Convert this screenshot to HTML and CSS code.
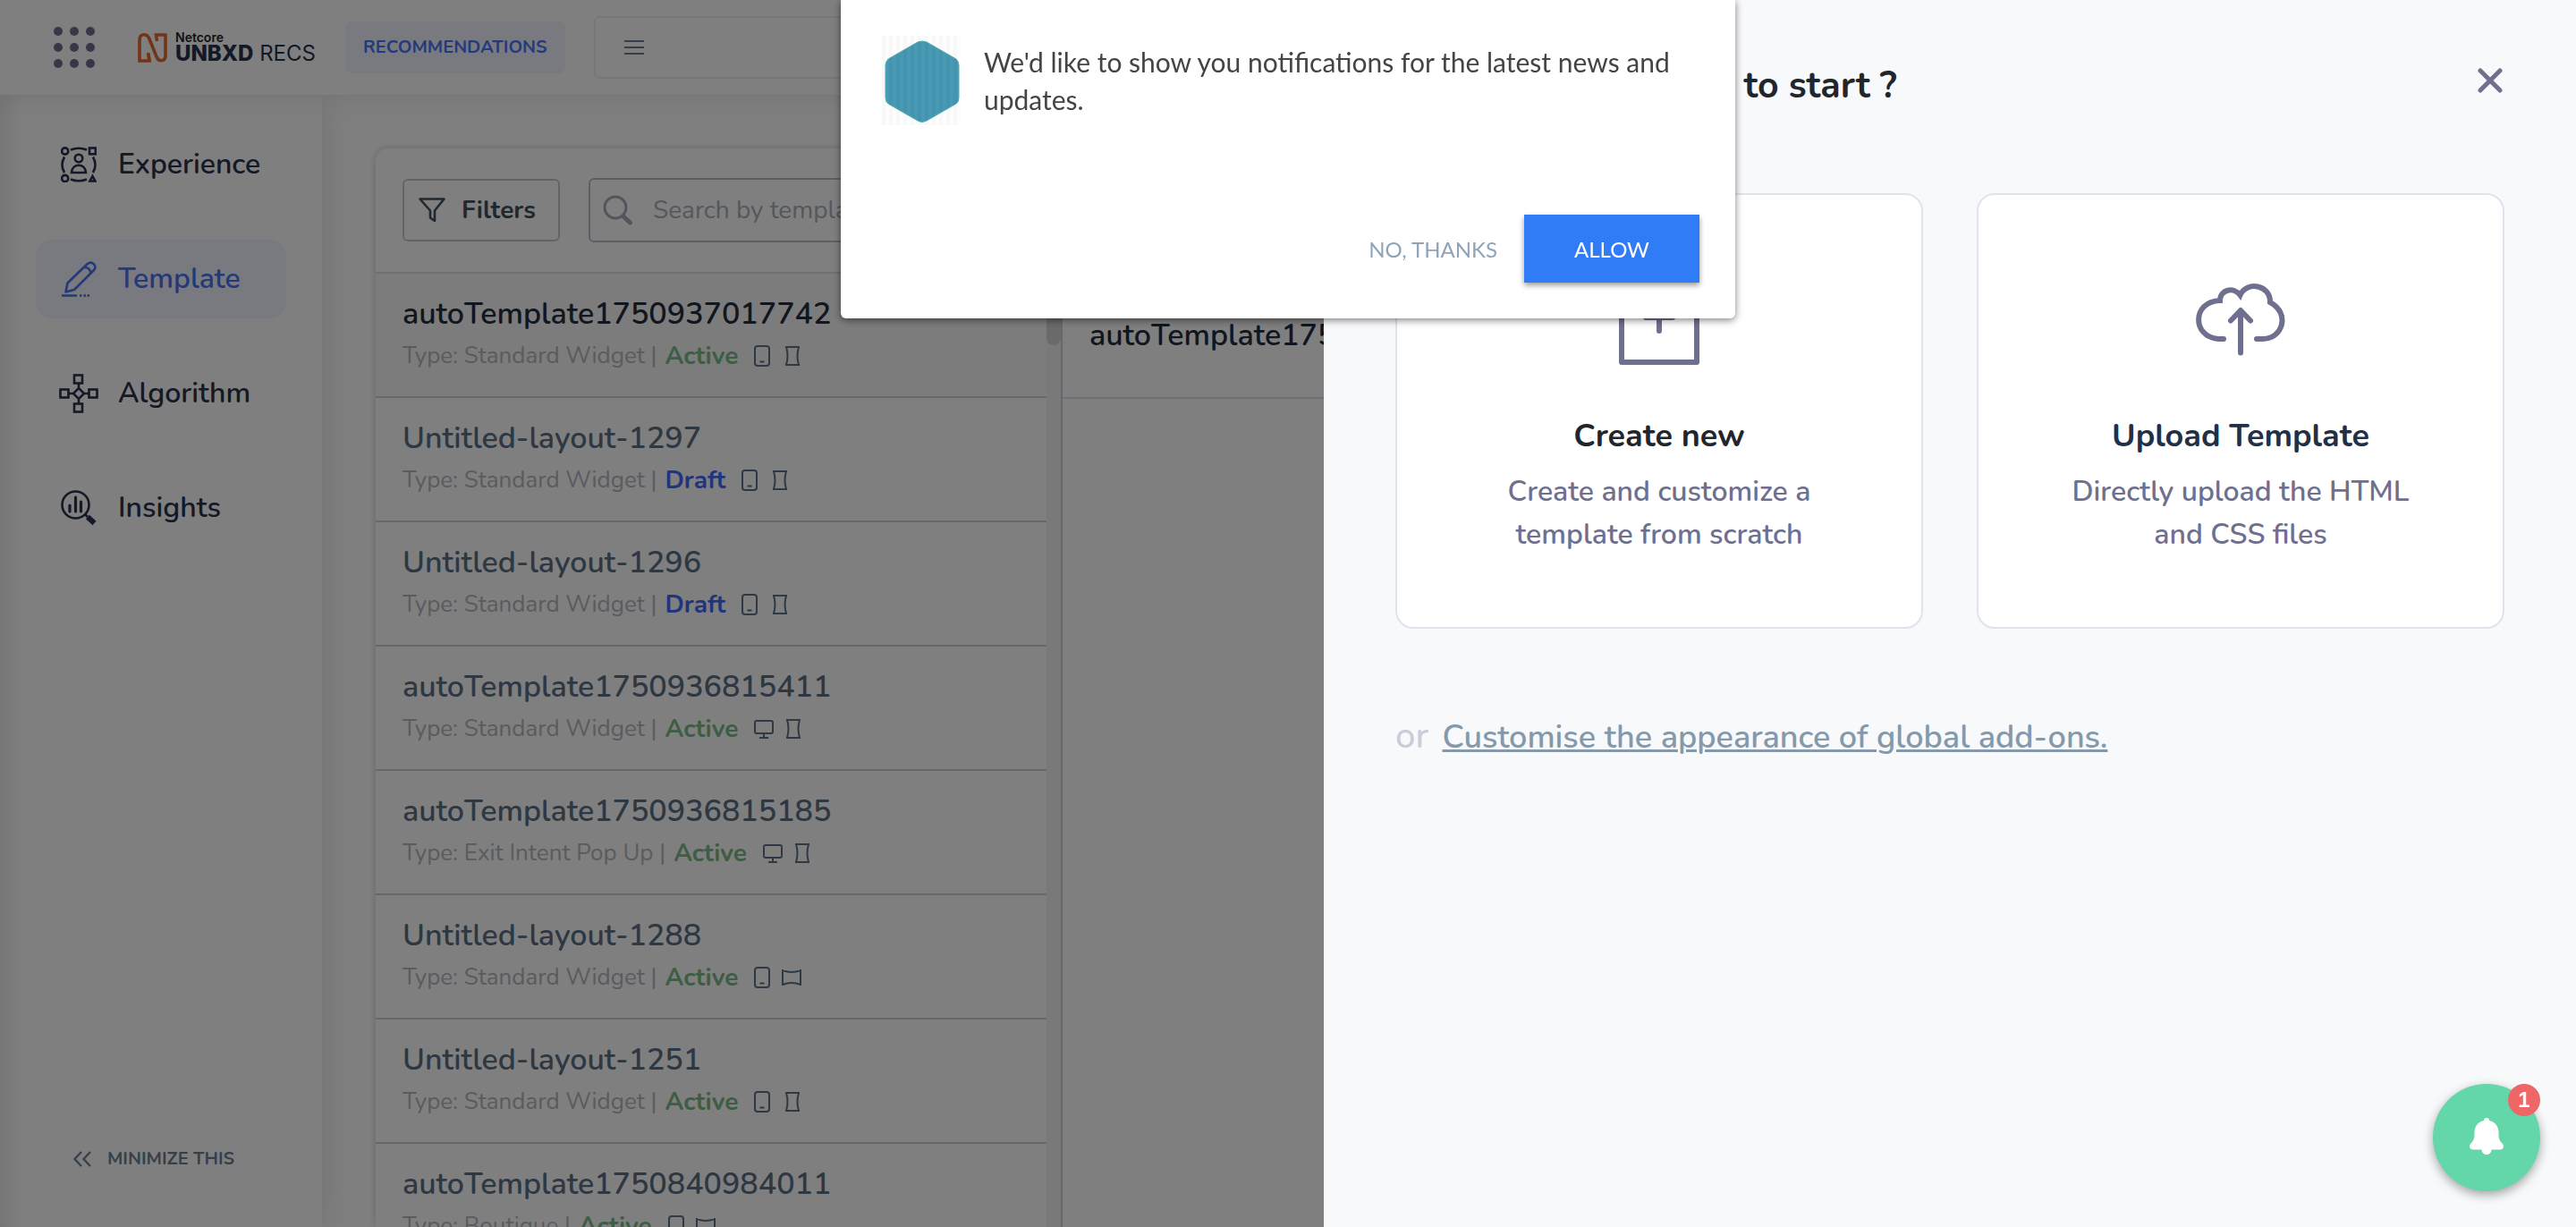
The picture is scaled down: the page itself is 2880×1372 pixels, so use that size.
FILE: index.html
```html
<!DOCTYPE html>
<html lang="en">
<head>
<meta charset="utf-8">
<title>Netcore Unbxd Recs - Templates</title>
<link rel="stylesheet" href="styles.css">
</head>
<body>
<svg class="sprite" aria-hidden="true">
  <symbol id="phone" viewBox="0 0 20 24"><rect x="2" y="1" width="16" height="22" rx="3" fill="none" stroke="currentColor" stroke-width="2"/><path d="M7.500 18.500h5" stroke="currentColor" stroke-width="2"/></symbol>
  <symbol id="desktop" viewBox="0 0 24 24"><rect x="2" y="3" width="20" height="14" rx="2" fill="none" stroke="currentColor" stroke-width="2"/><path d="M12 17v4M7 22h10" stroke="currentColor" stroke-width="2"/></symbol>
  <symbol id="vertical" viewBox="0 0 20 24"><path d="M2 2h16M2 22h16M3 2q3 10 0 20M17 2q-3 10 0 20" fill="none" stroke="currentColor" stroke-width="2"/></symbol>
  <symbol id="horizontal" viewBox="0 0 24 24"><path d="M2 3v18M22 3v18M2 4q10 4 20 0M2 20q10-4 20 0" fill="none" stroke="currentColor" stroke-width="2"/></symbol>
</svg>

<div class="app">
  <header class="topbar">
    <button class="launcher" aria-label="Apps">
      <svg width="46" height="46" viewBox="0 0 46 46" fill="currentColor"><circle cx="5" cy="5" r="5"/><circle cx="23" cy="5" r="5"/><circle cx="41" cy="5" r="5"/><circle cx="5" cy="23" r="5"/><circle cx="23" cy="23" r="5"/><circle cx="41" cy="23" r="5"/><circle cx="5" cy="41" r="5"/><circle cx="23" cy="41" r="5"/><circle cx="41" cy="41" r="5"/></svg>
    </button>
    <a class="brand" href="#">
      <svg width="33" height="33" viewBox="0 0 33 33" fill="none" stroke="#e8682f" stroke-width="3.600"><path d="M12 23.500l1 7.500H2V8c0-8 8.500-8 11-1.500l8 20c2.500 6.500 10 5 10-1V2H20.500l1 7" /><path d="M13 31l-1.500-9"/></svg>
      <span class="brand-text">
        <span class="brand-top">Netcore</span>
        <span class="brand-main"><b>UNBXD</b> <span>RECS</span></span>
      </span>
    </a>
    <span class="chip">RECOMMENDATIONS</span>
    <button class="site-picker" aria-label="Choose site">
      <svg width="22" height="16" viewBox="0 0 22 16" stroke="currentColor" stroke-width="2"><path d="M0 1h22M0 8h22M0 15h22"/></svg>
    </button>
  </header>

  <div class="body">
    <nav class="sidebar">
      <a class="nav-item" href="#">
        <svg width="40" height="40" viewBox="0 0 40 40" fill="none" stroke="currentColor" stroke-width="2.600"><circle cx="4.700" cy="5" r="3.600"/><circle cx="4.700" cy="35.500" r="3.600"/><rect x="32" y="1.500" width="6.800" height="6.800"/><path d="M35.500 33l3 5.500h-6z"/><path d="M11 3.500q9-3.500 18 0M11 36.500q9 3.500 18 0M4 11.500q-5 9 0 17.500M36 11.500q5 9 0 17.500"/><circle cx="20" cy="13" r="4.300"/><path d="M12 29c1-11 15-11 16 0z"/></svg>
        <span>Experience</span>
      </a>
      <a class="nav-item active" href="#">
        <svg width="40" height="40" viewBox="0 0 40 40" fill="none" stroke="currentColor" stroke-width="2.600"><path d="M5.500 34.500l2-10L30 2.800c5-3.500 10.500 2 7.500 6.700L15 32z" stroke-linejoin="round"/><path d="M26.500 7q6 0 7 6.500"/><path d="M1 38.500h17M21 38.500h2.500M25.500 38.500h2.500M29.500 38.500h2.500"/></svg>
        <span>Template</span>
      </a>
      <a class="nav-item" href="#">
        <svg width="44" height="44" viewBox="0 0 44 44" fill="none" stroke="currentColor" stroke-width="2.600"><rect x="17" y="1.500" width="9" height="9"/><rect x="17" y="33.500" width="9" height="9"/><rect x="1.500" y="17.500" width="9" height="9"/><rect x="33.500" y="17.500" width="9" height="9"/><path d="M22 16l6 6-6 6-6-6zM22 10.500V16M22 28v5.500M10.500 22H16M28 22h5.500"/></svg>
        <span>Algorithm</span>
      </a>
      <a class="nav-item" href="#">
        <svg width="40" height="40" viewBox="0 0 40 40" fill="none" stroke="currentColor" stroke-width="2.600"><circle cx="16.500" cy="16.500" r="15"/><path d="M10 17v7M16.500 8v16M22.500 13v11" stroke-width="3.200" stroke-linecap="round"/><path d="M27 27l3 3" /><path d="M30 30l7.500 7" stroke-width="6"/></svg>
        <span>Insights</span>
      </a>
      <button class="minimize">
        <svg width="20" height="18" viewBox="0 0 20 18" fill="none" stroke="currentColor" stroke-width="2.400"><path d="M9 1L1.500 9 9 17M19 1l-7.500 8L19 17"/></svg>
        <span>MINIMIZE THIS</span>
      </button>
    </nav>

    <main class="main">
      <section class="panel">
        <div class="toolbar">
          <button class="filters">
            <svg width="30" height="28" viewBox="0 0 30 28" fill="none" stroke="currentColor" stroke-width="2.600"><path d="M1.500 1.500h27L18 14.500V26l-5-3.500v-8z" stroke-linejoin="round"/></svg>
            <span>Filters</span>
          </button>
          <label class="search">
            <svg width="34" height="34" viewBox="0 0 34 34" fill="none" stroke="currentColor" stroke-width="3"><circle cx="14" cy="14" r="12"/><path d="M23 24l7.500 7" stroke-width="5" stroke-linecap="round"/></svg>
            <input type="text" aria-label="Search templates" placeholder="Search by template name">
          </label>
        </div>
        <div class="columns">
          <ul class="list">
            <li class="row selected"><div class="name">autoTemplate1750937017742</div><div class="meta"><span>Type: Standard Widget |</span><b class="live">Active</b><svg class="dev"><use href="#phone"/></svg><svg class="dir"><use href="#vertical"/></svg></div></li>
            <li class="row"><div class="name">Untitled-layout-1297</div><div class="meta"><span>Type: Standard Widget |</span><b class="draft">Draft</b><svg class="dev"><use href="#phone"/></svg><svg class="dir"><use href="#vertical"/></svg></div></li>
            <li class="row"><div class="name">Untitled-layout-1296</div><div class="meta"><span>Type: Standard Widget |</span><b class="draft">Draft</b><svg class="dev"><use href="#phone"/></svg><svg class="dir"><use href="#vertical"/></svg></div></li>
            <li class="row"><div class="name">autoTemplate1750936815411</div><div class="meta"><span>Type: Standard Widget |</span><b class="live">Active</b><svg class="dev wide"><use href="#desktop"/></svg><svg class="dir"><use href="#vertical"/></svg></div></li>
            <li class="row"><div class="name">autoTemplate1750936815185</div><div class="meta"><span>Type: Exit Intent Pop Up |</span><b class="live">Active</b><svg class="dev wide"><use href="#desktop"/></svg><svg class="dir"><use href="#vertical"/></svg></div></li>
            <li class="row"><div class="name">Untitled-layout-1288</div><div class="meta"><span>Type: Standard Widget |</span><b class="live">Active</b><svg class="dev"><use href="#phone"/></svg><svg class="dir wide"><use href="#horizontal"/></svg></div></li>
            <li class="row"><div class="name">Untitled-layout-1251</div><div class="meta"><span>Type: Standard Widget |</span><b class="live">Active</b><svg class="dev"><use href="#phone"/></svg><svg class="dir"><use href="#vertical"/></svg></div></li>
            <li class="row"><div class="name">autoTemplate1750840984011</div><div class="meta"><span>Type: Boutique |</span><b class="live">Active</b><svg class="dev"><use href="#phone"/></svg><svg class="dir wide"><use href="#horizontal"/></svg></div></li>
          </ul>
          <div class="track"><div class="thumb"></div></div>
          <div class="detail"><h2>autoTemplate1750937017742</h2></div>
        </div>
      </section>
    </main>
  </div>
</div>

<div class="overlay"></div>

<aside class="drawer">
  <div class="drawer-head">
    <h1>How would you like to start ?</h1>
    <button class="close" aria-label="Close"><svg width="28" height="28" viewBox="0 0 28 28" stroke="currentColor" stroke-width="5" stroke-linecap="round"><path d="M3 3l22 22M25 3L3 25"/></svg></button>
  </div>
  <div class="cards">
    <button class="card">
      <svg width="90" height="110" viewBox="0 0 90 110" fill="none" stroke="currentColor" stroke-width="6"><path d="M3 2h56l28 28v75H3z" stroke-linejoin="round"/><path d="M45 40v30M30 55h30" stroke-linecap="round"/></svg>
      <span class="card-title">Create new</span>
      <span class="card-text">Create and customize a<br>template from scratch</span>
    </button>
    <button class="card upload">
      <svg width="100" height="110" viewBox="0 5 100 110" fill="none" stroke="currentColor" stroke-width="6" stroke-linecap="round"><path d="M31 84h-6C-4 82-5 42 27 41c0-12 15-16 22.500-6 7-16 34-12 33.500 8C106 55 97 84 75 84h-7"/><path d="M50 99.500V53M39 63.500L50 52l11 11.500" stroke-linejoin="round"/></svg>
      <span class="card-title">Upload Template</span>
      <span class="card-text">Directly upload the HTML<br>and CSS files</span>
    </button>
  </div>
  <p class="alt"><span>or</span> <a href="#">Customise the appearance of global add-ons.</a></p>
</aside>

<div class="prompt" role="dialog" aria-label="Notifications">
  <div class="prompt-body">
    <svg width="88" height="100" viewBox="0 0 88 100">
      <defs><pattern id="fine" width="8" height="8" patternUnits="userSpaceOnUse"><path d="M0 0h4v8H0z" fill="#4295ab"/><path d="M4 0h4v8H4z" fill="#4a97b7"/></pattern><pattern id="pale" width="8" height="8" patternUnits="userSpaceOnUse"><path d="M0 0h8v8H0z" fill="#fdfdfd"/><path d="M0 0h4v8H0z" fill="#f8f8f8"/></pattern></defs>
      <path d="M0 0h88v100H0z" fill="url(#pale)"/>
      <path d="M40 7q5-2 10 0l33 19q3 3 3 7v36q0 5-3 7L50 95q-5 3-10 0L7 76q-3-2-3-7V33q0-4 3-7z" fill="url(#fine)" stroke="#4cb0b4" stroke-width="1"/>
    </svg>
    <p>We'd like to show you notifications for the latest news and updates.</p>
  </div>
  <div class="prompt-actions">
    <button class="deny">NO, THANKS</button>
    <button class="allow">ALLOW</button>
  </div>
</div>

<button class="bell" aria-label="Notifications">
  <svg width="38" height="44" viewBox="0 0 38 44" fill="#fff"><path d="M16 5a3 3 0 1 1 6 0c7 1.500 10.500 7 10.500 13 0 7 .5 9 4 12.500 3 3 1 7-2.500 7H24.500a5.500 5.500 0 0 1-11 0H4c-3.500 0-5.500-4-2.500-7 3.500-3.500 4-5.500 4-12.500 0-6 3.500-11.500 10.500-13z"/></svg>
  <span class="badge">1</span>
</button>
</body>
</html>
```

FILE: styles.css
```css
* { box-sizing: border-box; }
body { margin: 0; height: 100vh; overflow: hidden; font-family: "Nunito", "Open Sans", sans-serif; background: #fff; }
button { font: inherit; border: 0; padding: 0; background: none; cursor: pointer; }
a { text-decoration: none; }
svg { flex: none; }
.sprite { position: absolute; width: 0; height: 0; }

.app { height: 100vh; display: flex; flex-direction: column; }
.topbar { position: relative; z-index: 2; flex: none; height: 106px; padding: 0 60px; display: flex; align-items: center; box-shadow: 0 0 30px rgba(0, 0, 0, .1); background: #fff; }
.launcher { color: #6f6f8f; display: flex; }
.brand { display: flex; align-items: center; gap: 9px; margin-left: 48px; width: 232px; color: #28304f; font-family: "Inter", sans-serif; }
.brand-text { display: flex; flex-direction: column; }
.brand-top { font-size: 14px; line-height: 14px; font-weight: 600; color: #222; }
.brand-main { font-size: 24px; line-height: 22px; white-space: nowrap; }
.brand-main b { font-weight: 800; }
.brand-main span { font-weight: 400; }
.chip { padding: 0 20px; height: 58px; line-height: 58px; border-radius: 8px; background: #f1f4ff; color: #4a74f8; font-size: 20px; font-weight: 700; }
.site-picker { margin-left: 32px; width: 700px; height: 70px; padding: 0 32px; border: 2px solid #eceef3; border-radius: 6px; color: #6a7d92; display: flex; align-items: center; }

.body { flex: 1; min-height: 0; display: flex; }
.sidebar { width: 360px; flex: none; padding: 34px 40px 62px; display: flex; flex-direction: column; gap: 40px; box-shadow: 0 0 40px rgba(0, 0, 0, .12), inset 24px 0 24px -16px rgba(0, 0, 0, .1); }
.nav-item { height: 88px; flex: none; border-radius: 18px; padding-left: 26px; display: grid; grid-template-columns: 44px 1fr; gap: 22px; align-items: center; justify-items: start; color: #28324f; font-size: 32px; line-height: 40px; font-weight: 600; }
.nav-item svg { justify-self: center; }
.nav-item.active { background: #f1f4ff; color: #4672f0; }
.minimize { margin-top: auto; padding-left: 42px; display: flex; align-items: center; gap: 18px; color: #6d8197; font-size: 20px; line-height: 28px; font-weight: 700; }

.main { flex: 1; min-width: 0; padding: 60px 60px 0; display: flex; }
.panel { flex: 1; min-width: 0; border-radius: 14px 14px 0 0; box-shadow: 0 0 8px rgba(0, 0, 0, .2); display: flex; flex-direction: column; }
.toolbar { flex: none; height: 140px; padding: 0 30px; display: flex; align-items: center; gap: 32px; border-bottom: 2px solid #dcdfec; }
.filters { width: 176px; height: 70px; padding: 0 16px; border: 2px solid #c3cad3; border-radius: 6px; display: flex; align-items: center; gap: 18px; color: #41505f; font-size: 28px; font-weight: 700; }
.search { width: 520px; height: 72px; border: 2px solid #b8c1cc; border-radius: 6px; padding: 0 14px; display: flex; align-items: center; gap: 20px; color: #a9a9b9; }
.search input { flex: 1; min-width: 0; border: 0; outline: 0; background: none; font: inherit; font-size: 28px; }
.search input::placeholder { color: #a9afb9; opacity: 1; }
.columns { flex: 1; min-height: 0; display: flex; }
.list { width: 750px; flex: none; margin: 0; padding: 0; list-style: none; overflow: hidden; }
.row { padding: 23px 30px 27px; border-bottom: 2px solid #ccd1dd; color: #5c7087; }
.row.selected { background: #f8f8f8; color: #222c3f; }
.name { font-size: 34px; line-height: 44px; font-weight: 600; margin-bottom: 7px; }
.meta { display: flex; align-items: center; height: 36px; font-size: 26px; line-height: 36px; color: #5f7387; }
.meta span { color: #b6b6be; margin-right: 9px; }
.meta b { font-size: 28px; font-weight: 700; margin-right: 17px; }
.live { color: #7abb88; }
.draft { color: #426bf8; }
.dev, .dir { width: 20px; height: 24px; }
.dir { margin-left: 14px; }
.wide { width: 24px; }
.dev.wide + .dir, .dir.wide { margin-left: 11px; }
.track { width: 16px; flex: none; background: #f3f3f3; }
.thumb { height: 80px; border-radius: 8px; background: #d4d4d4; }
.detail { flex: 1; min-width: 0; border-left: 2px solid #ccd1dd; }
.detail h2 { margin: 0; height: 140px; padding-left: 30px; line-height: 138px; border-bottom: 2px solid #dcdfec; font-size: 34px; font-weight: 600; color: #222c3f; }

.overlay { position: fixed; inset: 0; background: rgba(0, 0, 0, .5); z-index: 5; }

.drawer { position: fixed; z-index: 6; top: 0; right: 0; bottom: 0; width: 1400px; padding: 60px 80px; background: #f8f9fb; color: #6f6f8f; }
.drawer-head { height: 156px; display: flex; align-items: flex-start; justify-content: space-between; }
.drawer-head h1 { margin: 0; padding-top: 9px; font-size: 41px; line-height: 54px; font-weight: 700; color: #22262b; }
.close { padding: 16px 2px; color: #6f6f8f; display: flex; }
.cards { display: grid; grid-template-columns: 1fr 1fr; gap: 60px; }
.card { height: 487px; padding: 82px 40px 0; border: 2px solid #dfe3ec; border-radius: 20px; background: #fff; color: #6f6f8f; display: flex; flex-direction: column; align-items: center; justify-content: flex-start; }
.card-title { margin-top: 54px; font-size: 36px; line-height: 48px; font-weight: 700; color: #22262b; }
.upload .card-title { color: #223047; }
.card-text { margin-top: 14px; font-size: 32px; line-height: 48px; font-weight: 600; }
.alt { margin: 93px 0 0; font-size: 36px; line-height: 54px; font-weight: 600; color: #c8cdd9; }
.alt span { font-size: 40px; font-weight: 500; }
.alt a { margin-left: 6px; color: #8499ab; text-decoration: underline; text-decoration-thickness: 3px; }

.prompt { position: fixed; z-index: 8; top: 0; left: 50%; width: 1000px; margin-left: -500px; height: 356px; padding: 40px 40px 40px 46px; border-radius: 0 0 6px 6px; background: #fff; box-shadow: 0 2px 8px rgba(0, 0, 0, .5); font-family: "Lato", sans-serif; display: flex; flex-direction: column; justify-content: space-between; }
.prompt-body { display: flex; gap: 26px; }
.prompt-body p { margin: 8px 0 0; font-size: 30px; line-height: 42px; color: #444; }
.prompt-actions { display: flex; justify-content: flex-end; gap: 30px; font-size: 24px; }
.deny { color: #90a4b8; }
.allow { width: 196px; height: 76px; background: #307bf6; color: #fff; box-shadow: 0 3px 6px rgba(0, 0, 0, .4); }

.bell { position: fixed; z-index: 9; right: 40px; bottom: 40px; width: 120px; height: 120px; border-radius: 50%; background: #64d7aa; box-shadow: 0 4px 12px rgba(0, 0, 0, .35); display: flex; align-items: center; justify-content: center; }
.bell svg { margin-top: -4px; }
.badge { position: absolute; top: 0; right: 0; width: 36px; height: 36px; border-radius: 50%; background: #ee6666; color: #fff; font: 700 24px/36px "Liberation Sans", sans-serif; }
```
